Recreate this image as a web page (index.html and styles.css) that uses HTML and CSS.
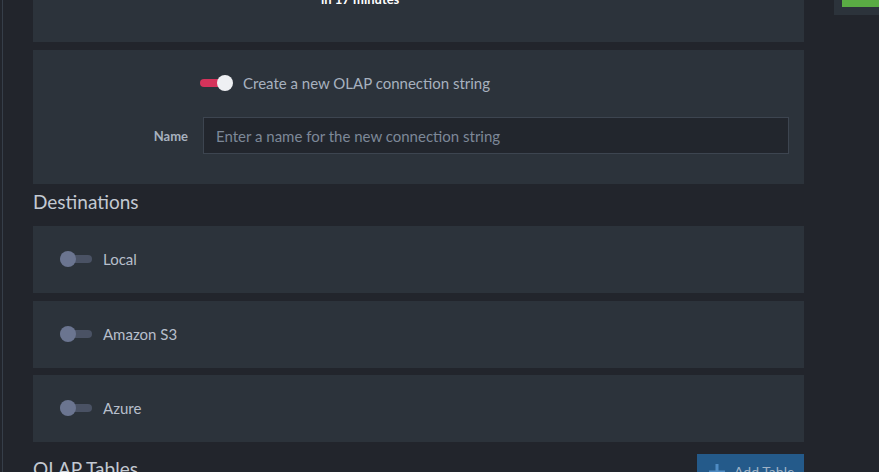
FILE: index.html
```html
<!DOCTYPE html>
<html>
<head>
<meta charset="utf-8">
<link rel="stylesheet" href="styles.css">
</head>
<body>
<div class="page">
  <div class="rail"></div>
  <main class="main">
    <section class="card card-top">
      <div class="eta">in 17 minutes</div>
    </section>
    <section class="card card-form">
      <div class="row toggle-row">
        <span class="toggle on"><span class="knob"></span></span>
        <span class="toggle-label">Create a new OLAP connection string</span>
      </div>
      <div class="row field-row">
        <label class="field-label">Name</label>
        <input class="field-input" type="text" placeholder="Enter a name for the new connection string">
      </div>
    </section>
    <h2 class="section-title">Destinations</h2>
    <section class="card dest">
      <span class="toggle"><span class="knob"></span></span>
      <span class="toggle-label">Local</span>
    </section>
    <section class="card dest">
      <span class="toggle"><span class="knob"></span></span>
      <span class="toggle-label">Amazon S3</span>
    </section>
    <section class="card dest">
      <span class="toggle"><span class="knob"></span></span>
      <span class="toggle-label">Azure</span>
    </section>
    <div class="tables-head">
      <h2 class="section-title">OLAP Tables</h2>
      <button class="btn-add">
        <svg width="18" height="18" viewBox="0 0 18 18"><path d="M9 1v16M1 9h16" stroke="#4f8cc4" stroke-width="3"/></svg>
        <span>Add Table</span>
      </button>
    </div>
  </main>
  <aside class="side">
    <div class="side-panel"><div class="side-bar"></div></div>
  </aside>
</div>
</body>
</html>
```

FILE: styles.css
```css
html, body {
  margin: 0;
  padding: 0;
  background: #22252c;
  font-family: Lato, "Open Sans", sans-serif;
  overflow: hidden;
}
.page {
  display: flex;
  height: 472px;
  overflow: hidden;
}
.rail {
  width: 31px;
  margin-left: 2px;
  border-left: 1px solid #363e49;
  box-sizing: border-box;
  flex: none;
}
.main {
  width: 771px;
  flex: none;
  display: flex;
  flex-direction: column;
}
.main > * {
  flex-shrink: 0;
}
.card {
  background: #2c333b;
}
.card-top {
  height: 42px;
  margin-bottom: 8px;
}
.eta {
  color: #ffffff;
  font-weight: 700;
  font-size: 13px;
  line-height: 16px;
  margin-top: -9px;
  padding-left: 288px;
}
.card-form {
  height: 134px;
  box-sizing: border-box;
  padding-top: 23px;
}
.row {
  display: flex;
  align-items: center;
}
.toggle-row {
  padding-left: 167px;
  height: 20px;
  gap: 10px;
}
.toggle {
  position: relative;
  width: 33px;
  height: 16px;
  flex: none;
  display: inline-block;
}
.toggle::before {
  content: "";
  position: absolute;
  left: 0;
  right: 1px;
  top: 4px;
  height: 8px;
  border-radius: 4px;
  background: #4a5264;
}
.toggle .knob {
  position: absolute;
  left: 0;
  top: 0;
  width: 16px;
  height: 16px;
  border-radius: 50%;
  background: #6b7590;
}
.toggle.on::before {
  background: #d5335b;
}
.toggle.on .knob {
  left: 17px;
  background: #eef0f3;
}
.toggle-label {
  color: #a7b1bf;
  font-size: 15px;
}
.field-row {
  margin-top: 24px;
}
.field-label {
  width: 155px;
  text-align: right;
  color: #a7b1bf;
  font-weight: 700;
  font-size: 13px;
  margin-right: 15px;
}
.field-input {
  width: 586px;
  height: 37px;
  box-sizing: border-box;
  background: #22262d;
  border: 1px solid #3d4550;
  border-radius: 0;
  color: #a7b1bf;
  font-family: Lato, sans-serif;
  font-size: 15px;
  padding: 0 12px;
  outline: none;
}
.field-input::placeholder {
  color: #7d8898;
}
.section-title {
  margin: 0;
  font-weight: 400;
  font-size: 19px;
  color: #c3c9d2;
  height: 42px;
  line-height: 36px;
}
.dest {
  height: 67px;
  display: flex;
  align-items: center;
  gap: 10px;
  padding-left: 27px;
  margin-bottom: 7.5px;
  padding-bottom: 1px;
  box-sizing: border-box;
}
.dest .toggle-label {
  color: #b7bfcb;
}
.tables-head {
  display: flex;
  justify-content: space-between;
  align-items: flex-start;
  margin-top: 4px;
}
.tables-head .section-title {
  line-height: 30px;
}
.btn-add {
  width: 107px;
  height: 40px;
  background: #245a8a;
  border: none;
  display: flex;
  align-items: flex-start;
  gap: 8px;
  padding: 9px 0 0 11px;
  color: #9fb2c6;
  font-family: Lato, sans-serif;
  font-size: 14px;
  line-height: 18px;
}
.side {
  margin-left: 30px;
  flex: 1;
}
.side-panel {
  background: #2c333b;
  height: 15px;
  padding-left: 8px;
}
.side-bar {
  background: #5aac44;
  height: 7px;
}
```
